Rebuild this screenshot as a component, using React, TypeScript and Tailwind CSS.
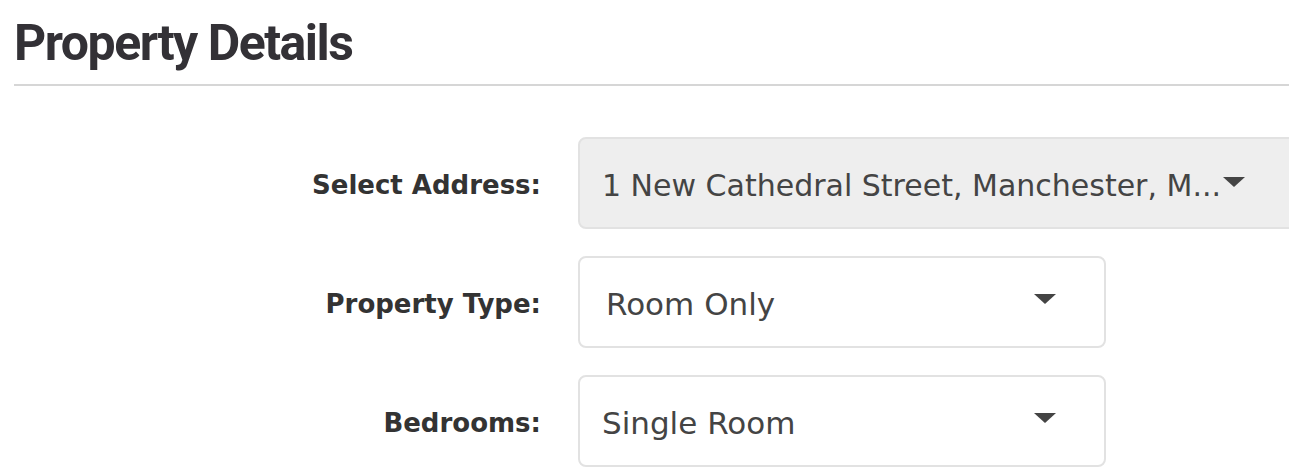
import React from 'react';

const baseFont = { fontFamily: '"DejaVu Sans", "Noto Sans", sans-serif' };

function Caret() {
  return (
    <svg width="22" height="10" viewBox="0 0 22 10" className="shrink-0">
      <path d="M0 0 H22 L11 10 Z" fill="#444444" />
    </svg>
  );
}

function Row({ label, children }: { label: string; children: React.ReactNode }) {
  return (
    <div className="flex items-center">
      <div className="w-[527px] shrink-0 pt-[5px] text-right text-[26px] font-bold text-[#333333]">
        {label}
      </div>
      <div className="ml-[37px]">{children}</div>
    </div>
  );
}

export default function App() {
  return (
    <div className="h-[472px] w-[1289px] overflow-hidden bg-white pl-[14px]" style={baseFont}>
      <h1 className="pt-[15px] font-[family-name:'Roboto',sans-serif] text-[50px] font-bold leading-[56px] tracking-[-1.5px] text-[#333136]">
        Property Details
      </h1>
      <div className="mt-[13px] h-[2px] bg-[#d6d6d6]" />

      <div className="mt-[51px] flex flex-col gap-[27px]">
        <Row label="Select Address:">
          <div className="flex h-[92px] w-[740px] items-center rounded-lg border-2 border-[#e2e2e2] bg-[#eeeeee] pl-[22px] pt-[4px] text-[30px] text-[#444444]">
            <span className="whitespace-nowrap">1 New Cathedral Street, Manchester, M...</span>
            <span className="-mt-[6px] ml-[2px]">
              <Caret />
            </span>
          </div>
        </Row>
        <Row label="Property Type:">
          <div className="flex h-[92px] w-[528px] items-center justify-between rounded-lg border-2 border-[#e2e2e2] bg-white pl-[26px] pr-[48px] pt-[4px] text-[31px] text-[#444444]">
            <span>Room Only</span>
            <span className="-mt-[10px]">
              <Caret />
            </span>
          </div>
        </Row>
        <Row label="Bedrooms:">
          <div className="flex h-[92px] w-[528px] items-center justify-between rounded-lg border-2 border-[#e2e2e2] bg-white pl-[22px] pr-[48px] pt-[4px] text-[31px] text-[#444444]">
            <span>Single Room</span>
            <span className="-mt-[10px]">
              <Caret />
            </span>
          </div>
        </Row>
      </div>
    </div>
  );
}
